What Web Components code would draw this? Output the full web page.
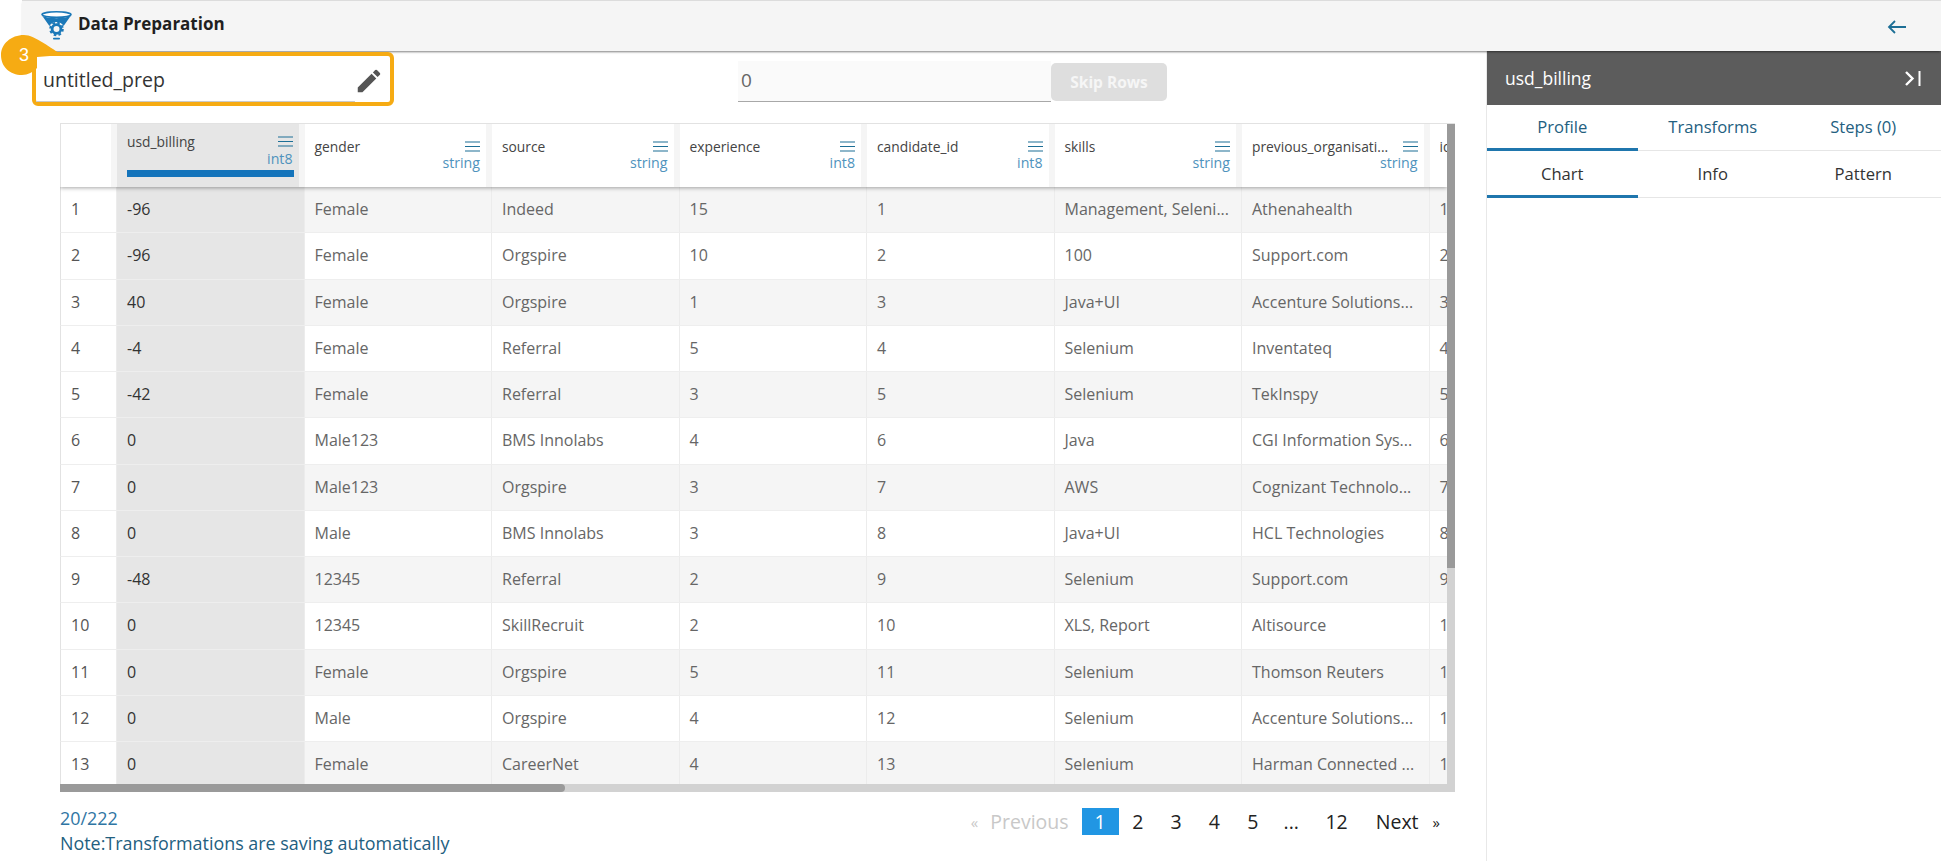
<!DOCTYPE html>
<html>
<head>
<meta charset="utf-8">
<title>Data Preparation</title>
<style>
    html, body { margin: 0; padding: 0; background: #fff; overflow: hidden; }
    body { width: 1941px; height: 861px; font-family: "Open Sans", "Noto Sans", sans-serif; }
    #page { display: flex; flex-direction: column; height: 861px; }
    #content { display: flex; flex: 1; min-height: 0; }
    #left { width: 1486px; display: flex; flex-direction: column; }
</style>
</head>
<body>
<div id="page">
    <top-bar>Data Preparation</top-bar>
    <div id="content">
        <div id="left">
            <tool-row></tool-row>
            <data-grid></data-grid>
            <grid-footer></grid-footer>
        </div>
        <side-panel></side-panel>
    </div>
</div>

<script>
class TopBar extends HTMLElement {
    constructor() {
        super();
        this.attachShadow({ mode: 'open' });
        this.shadowRoot.innerHTML = `
            <style>
                :host {
                    display: flex;
                    align-items: center;
                    height: 50px;
                    margin-left: 22px;
                    background: #f5f5f5;
                    border-top: 1px solid #dcdcdc;
                    box-shadow: 0 2px 2px -1px rgba(0,0,0,.5);
                    position: relative;
                    z-index: 3;
                    padding-left: 19px;
                }
                .logo { width: 31px; height: 29px; margin-top: -1px; flex: none; }
                .title { margin-left: 6px; margin-top: -6px; font-size: 17px; font-weight: 700; color: #1f1f1f; }
                .back { margin-left: auto; margin-right: 34px; width: 20px; height: 16px; margin-top: 1px; }
            </style>
            <svg class="logo" viewBox="0 0 31 29">
                <ellipse cx="15.5" cy="3.6" rx="14.5" ry="2.8" fill="#fff" stroke="#1b78b8" stroke-width="1.6"/>
                <path d="M1 4.5C5 8 26 8 30 4.5L22.6 15A8.2 8.2 0 0 0 8.4 15Z" fill="#1b78b8"/>
                <circle cx="15.5" cy="18" r="4.4" fill="none" stroke="#1b78b8" stroke-width="2.8"/>
                <circle cx="15.5" cy="18" r="6.3" fill="none" stroke="#1b78b8" stroke-width="2" stroke-dasharray="2.6 2.35"/>
                <rect x="12" y="26.8" width="7" height="1.7" rx=".8" fill="#1b78b8"/>
            </svg>
            <span class="title"><slot></slot></span>
            <svg class="back" viewBox="0 0 20 16">
                <path d="M19 8H2M8 2 2 8l6 6" fill="none" stroke="#1d6f96" stroke-width="1.8"/>
            </svg>
        `;
    }
}

class NameField extends HTMLElement {
    constructor() {
        super();
        this.attachShadow({ mode: 'open' });
        this.shadowRoot.innerHTML = `
            <style>
                :host {
                    display: flex;
                    align-items: center;
                    justify-content: space-between;
                    box-sizing: border-box;
                    width: 362px;
                    height: 54px;
                    border: 4px solid #f6ab13;
                    border-radius: 6px;
                    padding: 0 6px 0 7px;
                    font-size: 19.5px;
                    color: #333;
                    position: relative;
                    background: #fff;
                }
                .badge { position: absolute; left: -35px; top: -21px; width: 64px; height: 42px; }
                .badge span {
                    position: absolute; left: 0; top: 0; width: 46px; height: 41px;
                    display: flex; align-items: center; justify-content: center;
                    color: #fff; font: 18px "Liberation Sans", sans-serif;
                }
                .badge svg { position: absolute; left: 0; top: 0; width: 64px; height: 42px; }
                .pen { width: 30px; height: 30px; margin-top: 3px; }
                .line { position: absolute; left: 0; right: 35px; bottom: 0; height: 1px; background: #c9c9c9; }
            </style>
            <span>untitled_prep</span>
            <svg class="pen" viewBox="0 0 24 24"><path fill="#555" d="M3 17.25V21h3.75L17.81 9.94l-3.75-3.75L3 17.25zM20.71 7.04a1 1 0 0 0 0-1.41l-2.34-2.34a1 1 0 0 0-1.41 0l-1.83 1.83 3.75 3.75 1.83-1.83z"/></svg>
            <div class="line"></div>
            <div class="badge">
                <svg viewBox="0 0 64 42"><path fill="#f6ab13" d="M23 0C10 0 0 9 0 20c0 12 9 20 21 20 6 0 11-3 15-7V22L62 20C50 14 34 0 23 0z"/></svg>
                <span>3</span>
            </div>
        `;
    }
}

class ToolRow extends HTMLElement {
    constructor() {
        super();
        this.attachShadow({ mode: 'open' });
        this.shadowRoot.innerHTML = `
            <style>
                :host { display: flex; align-items: flex-start; height: 72px; padding-left: 32px; flex: none; position: relative; z-index: 4; }
                name-field { margin-top: 1px; }
                .skip {
                    margin-left: 344px;
                    margin-top: 10px;
                    box-sizing: border-box;
                    width: 313px;
                    height: 41px;
                    background: #fafafa;
                    border-bottom: 1px solid #a8a8a8;
                    padding: 0 3px;
                    font-size: 19px;
                    line-height: 38px;
                    color: #666;
                }
                .btn {
                    margin-top: 12px;
                    box-sizing: border-box;
                    width: 116px;
                    height: 38px;
                    border-radius: 5px;
                    background: #dedede;
                    color: #f6f6f6;
                    font-size: 15.5px;
                    font-weight: 700;
                    display: flex;
                    align-items: center;
                    justify-content: center;
                }
            </style>
            <name-field></name-field>
            <div class="skip">0</div>
            <div class="btn">Skip Rows</div>
        `;
    }
}

const COLS = [
    ['usd_billing', 'int8'], ['gender', 'string'], ['source', 'string'], ['experience', 'int8'],
    ['candidate_id', 'int8'], ['skills', 'string'], ['previous_organisati...', 'string'], ['id', '']
];
const ROWS = [
    ['-96', 'Female', 'Indeed', '15', '1', 'Management, Seleni...', 'Athenahealth', '1'],
    ['-96', 'Female', 'Orgspire', '10', '2', '100', 'Support.com', '2'],
    ['40', 'Female', 'Orgspire', '1', '3', 'Java+UI', 'Accenture Solutions...', '3'],
    ['-4', 'Female', 'Referral', '5', '4', 'Selenium', 'Inventateq', '4'],
    ['-42', 'Female', 'Referral', '3', '5', 'Selenium', 'TekInspy', '5'],
    ['0', 'Male123', 'BMS Innolabs', '4', '6', 'Java', 'CGI Information Sys...', '6'],
    ['0', 'Male123', 'Orgspire', '3', '7', 'AWS', 'Cognizant Technolo...', '7'],
    ['0', 'Male', 'BMS Innolabs', '3', '8', 'Java+UI', 'HCL Technologies', '8'],
    ['-48', '12345', 'Referral', '2', '9', 'Selenium', 'Support.com', '9'],
    ['0', '12345', 'SkillRecruit', '2', '10', 'XLS, Report', 'Altisource', '1'],
    ['0', 'Female', 'Orgspire', '5', '11', 'Selenium', 'Thomson Reuters', '1'],
    ['0', 'Male', 'Orgspire', '4', '12', 'Selenium', 'Accenture Solutions...', '1'],
    ['0', 'Female', 'CareerNet', '4', '13', 'Selenium', 'Harman Connected ...', '1']
];

class DataGrid extends HTMLElement {
    constructor() {
        super();
        this.attachShadow({ mode: 'open' });
        const menu = `<svg class="menu" viewBox="0 0 15 11"><path d="M0 1h15M0 5.5h15M0 10h15" stroke="#1d6f96" stroke-width="1.2" fill="none"/></svg>`;
        const head = COLS.map((c, i) => `
            <div class="hd ${i === 0 ? 'sel' : ''}">
                <div class="hd-in">
                    <div class="name"><span>${c[0]}</span>${c[1] ? menu : ''}</div>
                    <div class="type">${c[1]}</div>
                    ${i === 0 ? '<div class="bar"></div>' : ''}
                </div>
            </div>`).join('');
        const body = ROWS.map((r, n) => `
            <div class="row ${n % 2 === 0 ? 'odd' : ''}">
                <div class="td idx">${n + 1}</div>
                ${r.map((v, i) => `<div class="td ${i === 0 ? 'sel' : ''}">${v}</div>`).join('')}
            </div>`).join('');
        this.shadowRoot.innerHTML = `
            <style>
                :host {
                    display: block;
                    flex: none;
                    width: 1395px;
                    height: 669px;
                    margin-left: 60px;
                    position: relative;
                    overflow: hidden;
                    border-top: 1px solid #e2e2e2;
                    box-sizing: border-box;
                }
                .view { width: 1387px; height: 661px; overflow: hidden; }
                .head, .row { display: grid; grid-template-columns: 56px repeat(8, 187.5px); }
                .head {
                    height: 63px;
                    background: #f5f5f5;
                    box-shadow: 0 1px 4px rgba(0,0,0,.35);
                    position: relative;
                    z-index: 1;
                    border-left: 1px solid #e2e2e2;
                }
                .corner { background: #fff; margin-right: 6px; }
                .hd { padding-right: 6px; }
                .hd-in { background: #fff; height: 100%; box-sizing: border-box; padding: 12px 6px 0 10px; position: relative; }
                .hd.sel .hd-in { background: #e6e6e6; padding-top: 7px; }
                .name { display: flex; justify-content: space-between; align-items: center; font-size: 13.8px; color: #444; height: 20px; white-space: nowrap; }
                .menu { width: 15px; height: 11px; flex: none; }
                .type { text-align: right; font-size: 14.2px; color: #4f93bd; line-height: 16px; margin-top: 0; }
                .hd:not(.sel) .type { margin-top: -1px; }
                .bar { position: absolute; left: 10px; right: 5px; top: 46px; height: 7px; background: #1474bb; }
                .row { height: 46.25px; background: #fff; border-left: 1px solid #e2e2e2; box-sizing: border-box; border-bottom: 1px solid #eee; }
                .row.odd { background: #f5f5f5; }
                .td { box-sizing: border-box; padding-left: 10px; font-size: 16px; line-height: 45px; color: #666; border-right: 1px solid #ececec; white-space: nowrap; overflow: hidden; }
                .td.idx { background: #fff; color: #555; }
                .td.sel { background: #e6e6e6; color: #333; }
                .vtrack { position: absolute; right: 0; top: 0; bottom: 0; width: 8px; background: #d2d2d2; }
                .vthumb { position: absolute; right: 0; top: 0; width: 8px; height: 444px; background: #9a9a9a; z-index: 2; }
                .htrack { position: absolute; left: 0; right: 0; bottom: 0; height: 8px; background: #d2d2d2; }
                .hthumb { position: absolute; left: 0; bottom: 0; height: 8px; width: 505px; background: #9a9a9a; border-radius: 0 4px 4px 0; }
            </style>
            <div class="view">
                <div class="head"><div class="corner"></div>${head}</div>
                ${body}
            </div>
            <div class="vtrack"></div><div class="vthumb"></div>
            <div class="htrack"></div><div class="hthumb"></div>
        `;
    }
}

class GridFooter extends HTMLElement {
    constructor() {
        super();
        this.attachShadow({ mode: 'open' });
        const pages = ['2', '3', '4', '5'].map(p => `<span class="p">${p}</span>`).join('');
        this.shadowRoot.innerHTML = `
            <style>
                :host { display: flex; justify-content: space-between; padding: 14px 46px 0 60px; flex: none; }
                .info { font-size: 17.9px; line-height: 25px; color: #23607f; }
                .count { color: #2f75a3; }
                .pager { display: flex; align-items: center; height: 27px; margin-top: 2px; font-size: 19.5px; color: #222; }
                .off { color: #c8c8c8; }
                .cur { width: 37px; height: 27px; background: #2196e3; color: #fff; display: flex; align-items: center; justify-content: center; margin-left: 13px; }
                .p { padding: 0 13.6px; text-align: center; }
                .p.wide { padding: 0 15px; }
                .dots { width: 38.5px; text-align: center; }
                .small { font-size: 15px; }
            </style>
            <div class="info">
                <div class="count">20/222</div>
                <div>Note:Transformations are saving automatically</div>
            </div>
            <div class="pager">
                <span class="off small">«</span>
                <span class="off" style="margin-left:12px">Previous</span>
                <span class="cur">1</span>
                ${pages}
                <span class="dots">...</span>
                <span class="p wide">12</span>
                <span style="margin-left:13px">Next</span>
                <span class="small" style="margin-left:14px">»</span>
            </div>
        `;
    }
}

class SidePanel extends HTMLElement {
    constructor() {
        super();
        this.attachShadow({ mode: 'open' });
        this.shadowRoot.innerHTML = `
            <style>
                :host { display: block; flex: 1; border-left: 1px solid #e8e8e8; position: relative; }
                .title {
                    height: 54px;
                    background: #5c5c5c;
                    color: #fff;
                    display: flex;
                    align-items: center;
                    justify-content: space-between;
                    padding: 0 20px 0 18px;
                    font-size: 17.5px;
                }
                .title svg { width: 17px; height: 17px; }
                .tabs { display: grid; grid-template-columns: repeat(3, 150.5px); border-bottom: 1px solid #e6e6e6; }
                .tab {
                    height: 43px;
                    display: flex; align-items: center; justify-content: center;
                    font-size: 16.6px;
                    border-bottom: 3px solid transparent;
                    margin-bottom: -1px;
                }
                .t2 .tab { height: 44px; }
                .t1 .tab { color: #23607f; }
                .t2 .tab { color: #333; }
                .tab.on { border-bottom-color: #1f76ad; }
            </style>
            <div class="title">
                <span>usd_billing</span>
                <svg viewBox="0 0 17 17"><path d="M2 2 8.5 8.5 2 15" fill="none" stroke="#fff" stroke-width="2.4"/><path d="M15.5 1v15" stroke="#fff" stroke-width="2"/></svg>
            </div>
            <div class="tabs t1">
                <div class="tab on">Profile</div><div class="tab">Transforms</div><div class="tab">Steps (0)</div>
            </div>
            <div class="tabs t2">
                <div class="tab on">Chart</div><div class="tab">Info</div><div class="tab">Pattern</div>
            </div>
        `;
    }
}

customElements.define('top-bar', TopBar);
customElements.define('name-field', NameField);
customElements.define('tool-row', ToolRow);
customElements.define('data-grid', DataGrid);
customElements.define('grid-footer', GridFooter);
customElements.define('side-panel', SidePanel);
</script>
</body>
</html>
